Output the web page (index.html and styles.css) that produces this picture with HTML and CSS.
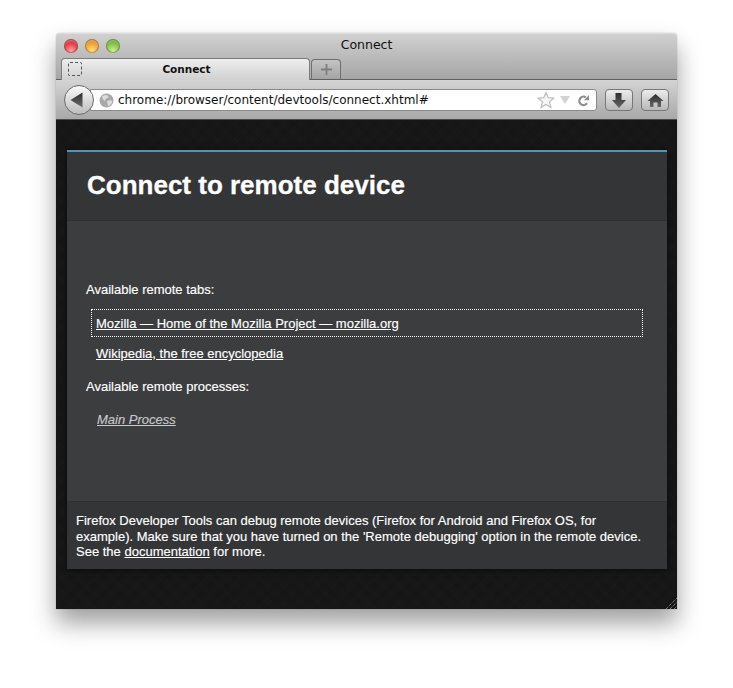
FILE: index.html
```html
<!DOCTYPE html>
<html lang="en">
<head>
<meta charset="utf-8">
<title>Connect</title>
<link rel="stylesheet" href="styles.css">
</head>
<body>
<div class="window">
  <div class="chrome">
    <div class="titlebar">
      <div class="lights">
        <span class="light red"></span>
        <span class="light amber"></span>
        <span class="light green"></span>
      </div>
      <div class="window-title">Connect</div>
    </div>
    <div class="tabstrip">
      <div class="tab">
        <span class="favicon"></span>
        <span class="tab-label">Connect</span>
      </div>
      <div class="newtab">
        <svg width="13" height="13" viewBox="0 0 13 13"><path d="M5.600 1h1.800v4.600H12v1.800H7.400V12H5.600V7.400H1V5.600h4.600z" fill="#7e7e7e"/></svg>
      </div>
    </div>
  </div>
  <div class="toolbar">
    <div class="back">
      <svg width="20" height="20" viewBox="0 0 20 20"><defs><linearGradient id="arrow" x1="0" y1="0" x2="0" y2="1"><stop offset="0" stop-color="#2c2c2c"/><stop offset="1" stop-color="#6b6b6b"/></linearGradient></defs><path d="M2.500 10 14.500 2.500v15z" fill="url(#arrow)"/></svg>
    </div>
    <div class="urlbar">
      <svg class="globe" width="15" height="15" viewBox="0 0 15 15"><circle cx="7.500" cy="7.500" r="7" fill="#a9a9a9"/><path d="M3 3.500 6 2l3 .5.500 2L7 5.500l-1 2.500-2-1.500zM8 8l4-1 1.500 2-2.500 3.500-2 .5z" fill="#dcdcdc"/></svg>
      <span class="url">chrome://browser/content/devtools/connect.xhtml#</span>
      <svg class="star" width="18" height="18" viewBox="0 0 18 18"><path d="M9 1.500 11.200 6.700 16.800 7.200 12.500 10.900 13.900 16.400 9 13.500 4.100 16.400 5.500 10.900 1.200 7.200 6.800 6.700z" fill="#f5f5f5" stroke="#bdbdbd" stroke-width="1.200"/></svg>
      <svg class="drop" width="10" height="8" viewBox="0 0 10 8"><path d="M0 0h10L5 8z" fill="#d2d2d2"/></svg>
      <svg class="reload" width="13" height="13" viewBox="0 0 13 13"><path d="M10 9.200A4.200 4.200 0 1 1 8.800 3.300" fill="none" stroke="#8e8e8e" stroke-width="2.200"/><path d="M7 6.200 12 6.200 12 1z" fill="#8e8e8e"/></svg>
    </div>
    <div class="btn">
      <svg width="16" height="17" viewBox="0 0 16 17"><defs><linearGradient id="dl" x1="0" y1="0" x2="0" y2="1"><stop offset="0" stop-color="#2e2e2e"/><stop offset="1" stop-color="#686868"/></linearGradient></defs><path d="M4.500 1h6v7H15l-7 8-7-8h3.500z" fill="url(#dl)"/></svg>
    </div>
    <div class="btn">
      <svg width="17" height="15" viewBox="0 0 17 15"><defs><linearGradient id="hm" x1="0" y1="0" x2="0" y2="1"><stop offset="0" stop-color="#2e2e2e"/><stop offset="1" stop-color="#686868"/></linearGradient></defs><path d="M8.500 1 16.500 8H14v6h-3.500V9.500h-4V14H3V8H.5z" fill="url(#hm)"/></svg>
    </div>
  </div>
  <main class="content">
    <section class="panel">
      <header class="panel-head">
        <h1>Connect to remote device</h1>
      </header>
      <div class="panel-body">
        <p class="label">Available remote tabs:</p>
        <ul class="remote-list">
          <li class="focused"><a href="#">Mozilla — Home of the Mozilla Project — mozilla.org</a></li>
          <li><a href="#">Wikipedia, the free encyclopedia</a></li>
        </ul>
        <p class="label label-proc">Available remote processes:</p>
        <ul class="remote-list">
          <li class="process"><a href="#">Main Process</a></li>
        </ul>
      </div>
      <footer class="panel-foot">Firefox Developer Tools can debug remote devices (Firefox for Android and Firefox OS, for example). Make sure that you have turned on the 'Remote debugging' option in the remote device. See the <a href="#">documentation</a> for more.</footer>
    </section>
    <svg class="grip" width="11" height="11" viewBox="0 0 11 11"><path d="M0 11 11 0M4 11l7-7M8 11l3-3" stroke="#a8a8a8" stroke-width="1" stroke-dasharray="1 1" fill="none"/></svg>
  </main>
</div>
</body>
</html>
```
FILE: styles.css
```css
* { box-sizing: border-box; }
html, body { margin: 0; height: 100%; background: #fff; overflow: hidden; }
body { padding: 33px 0 0 56px; font-family: "Liberation Sans", Arial, sans-serif; }
.window {
  width: 621px;
  height: 576px;
  display: flex;
  flex-direction: column;
  border-radius: 4px 4px 0 0;
  box-shadow: 0 0 1px rgba(0,0,0,.5), 0 14px 24px rgba(0,0,0,.38);
}
.chrome {
  height: 47px;
  background: linear-gradient(#d0d0d0, #a6a6a6);
  border-top: 1px solid #dcdcdc;
  border-bottom: 1px solid #606060;
  border-radius: 4px 4px 0 0;
  flex: none;
}
.titlebar { height: 24px; display: flex; align-items: center; position: relative; padding-left: 8px; }
.lights { display: flex; gap: 7px; }
.light { width: 14px; height: 14px; border-radius: 50%; box-shadow: inset 0 0 0 1px rgba(0,0,0,.28), inset 0 2px 2px rgba(255,255,255,.35); }
.red { background: radial-gradient(circle at 50% 85%, #ffa6a8 0, #ea3a42 55%, #a8262c 100%); }
.amber { background: radial-gradient(circle at 50% 85%, #ffe27a 0, #ee9c2a 60%, #b06c20 100%); }
.green { background: radial-gradient(circle at 50% 85%, #cff09a 0, #7cbc3e 60%, #55882c 100%); }
.window-title {
  position: absolute; left: 0; right: 0; top: 3px;
  text-align: center;
  font: 12.500px/16px "DejaVu Sans", sans-serif;
  color: #111;
}
.tabstrip { height: 21px; display: flex; align-items: flex-end; padding-left: 5px; gap: 1px; }
.tab {
  width: 249px; height: 22px;
  position: relative; top: 1px;
  background: linear-gradient(#eeeeee, #d0d0d0);
  border: 1px solid #7d7d7d; border-bottom: none;
  border-radius: 4px 4px 0 0;
  display: flex; align-items: center; padding-left: 6px;
}
.favicon { width: 14px; height: 14px; border: 1px dashed #555; border-radius: 2px; flex: none; margin-bottom: 1px; }
.tab-label { flex: 1; text-align: center; font: bold 10.500px/14px "DejaVu Sans", sans-serif; color: #111; padding: 0 18px 2px 0; }
.newtab {
  width: 30px; height: 20px;
  background: linear-gradient(#c4c4c4, #a4a4a4);
  border: 1px solid #707070; border-bottom: none;
  border-radius: 4px 4px 0 0;
  display: flex; align-items: center; justify-content: center;
}
.toolbar {
  height: 40px; flex: none;
  background: linear-gradient(#d4d4d4, #a8a8a8);
  border-bottom: 1px solid #4a4a4a;
  display: flex; align-items: center; padding: 1px 8px 0 8px;
  position: relative;
}
.back {
  width: 30px; height: 30px; border-radius: 50%;
  background: linear-gradient(#fafafa, #bcbcbc);
  border: 1px solid #6a6a6a;
  display: flex; align-items: center; justify-content: center;
  position: relative; z-index: 1;
  padding-right: 3px; flex: none;
}
.urlbar {
  width: 507px; height: 22px; margin-left: -4px;
  background: #fff;
  border: 1px solid #8a8a8a; border-radius: 0 3px 3px 0;
  display: flex; align-items: center; padding: 0 6px 0 8px;
  flex: none;
}
.globe { flex: none; }
.url { font: 12px/16px "DejaVu Sans", sans-serif; color: #111; margin-left: 4px; flex: 1; white-space: nowrap; }
.star { margin-right: 5px; flex: none; }
.drop { margin-right: 7px; flex: none; }
.reload { flex: none; }
.btn {
  width: 28px; height: 22px; flex: none;
  margin-left: 8px;
  background: linear-gradient(#ececec, #b8b8b8);
  border: 1px solid #777; border-radius: 4px;
  display: flex; align-items: center; justify-content: center;
}
.content {
  flex: 1;
  background-color: #141414;
  background-image: repeating-linear-gradient(45deg, rgba(255,255,255,.012) 0 1px, transparent 1px 2px), repeating-linear-gradient(-45deg, rgba(255,255,255,.012) 0 1px, transparent 1px 2px);
  padding: 30px 10px 40px 11px;
  position: relative;
}
.panel {
  width: 600px; height: 419px;
  background: #3c3d3f;
  box-shadow: 0 1px 6px rgba(0,0,0,.6);
  display: flex; flex-direction: column;
  color: #fff;
}
.panel-head {
  height: 71px; flex: none;
  background: #343537;
  border-top: 2px solid #5793b2;
  border-bottom: 1px solid #2f3032;
  padding: 17px 20px 0;
}
h1 { margin: 0; font-size: 26px; line-height: 32px; font-weight: bold; -webkit-text-stroke: .3px #fff; }
.panel-body { flex: 1; padding: 61px 24px 0 19px; font-size: 13px; line-height: 16px; -webkit-text-stroke: .15px currentColor; }
.label { margin: 0; }
.label-proc { margin-top: 12px; }
.remote-list { list-style: none; margin: 0; padding: 0; }
.remote-list li { height: 28px; margin: 2px 0 0 5px; padding: 6px 4px; border: 1px solid transparent; }
.remote-list a { color: #fff; }
.remote-list .focused { margin-top: 11px; border: 1px dotted #fff; }
.remote-list .process { margin-top: 10px; font-style: italic; padding-left: 5px; }
.remote-list .process a { color: #c8c9cb; }
.panel-foot {
  height: 68px; flex: none;
  background: #343537;
  border-top: 1px solid #2f3032;
  padding: 11px 20px 0 9px;
  font-size: 13px; line-height: 15.500px;
  -webkit-text-stroke: .15px currentColor;
}
.panel-foot a { color: #fff; }
.grip { position: absolute; right: 0; bottom: 0; }
```
